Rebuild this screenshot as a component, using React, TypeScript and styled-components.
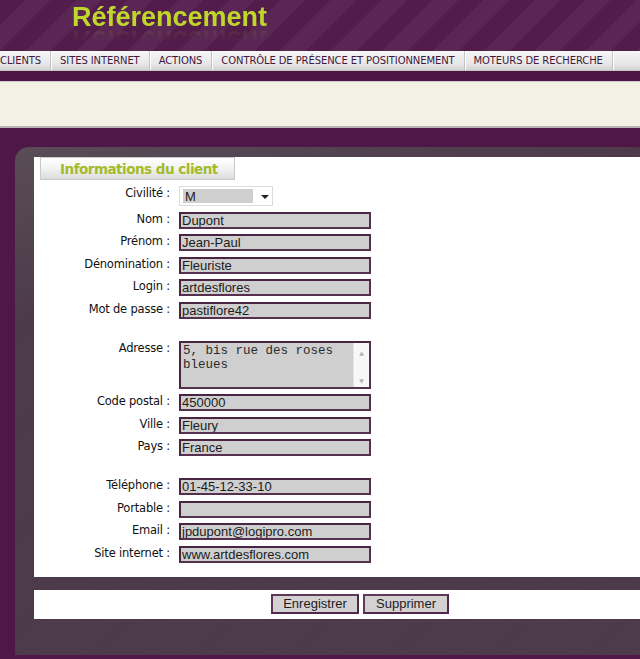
import React from 'react'
import styled, { createGlobalStyle } from 'styled-components'

const GlobalStyle = createGlobalStyle`
    body {
        margin: 0;
        background: #4f1748;
        font-family: "DejaVu Sans", Verdana, sans-serif;
        overflow: hidden;
    }
`

const Header = styled.div`
    height: 51px;
    background: repeating-linear-gradient(135deg, #521c4b 0px, #521c4b 18px, #5a2754 18px, #5a2754 36px);
    padding-left: 72px;
    box-sizing: border-box;
`

const Title = styled.div`
    font-family: "Liberation Sans", Arial, sans-serif;
    font-weight: bold;
    font-size: 27px;
    line-height: 32px;
    color: #bfd72a;
    padding-top: 1px;
    -webkit-box-reflect: below -9px linear-gradient(transparent 50%, rgba(255, 255, 255, 0.18));
`

const Nav = styled.ul`
    display: flex;
    margin: 0;
    padding: 0;
    list-style: none;
    height: 19px;
    background: linear-gradient(#f6f6f6, #e6e6e6 70%, #d2d2d2);
    border-bottom: 1px solid #c4c4c4;
`

const NavItem = styled.li<{ $first?: boolean }>`
    padding: 0 9px 0 ${p => (p.$first ? 0 : 9)}px;
    font-size: 10px;
    letter-spacing: -0.1px;
    line-height: 19px;
    text-transform: uppercase;
    color: #42183e;
    border-right: 1px solid #c2c2c2;
    box-shadow: 1px 0 0 #ffffff;
    white-space: nowrap;
`

const Band = styled.div`
    height: 10px;
    background: #4e1444;
    border-bottom: 1px solid #cfc8cd;
`

const Strip = styled.div`
    height: 44px;
    background: #f3f1e6;
    border-bottom: 2px solid #b8b2b6;
`

const Panel = styled.div`
    margin: 19px 0 0 15px;
    padding: 18px 0 36px 19px;
    border-top-left-radius: 14px;
    background:
        linear-gradient(165deg, rgba(110, 110, 110, 0.35) 0%, rgba(80, 60, 78, 0) 25%),
        repeating-linear-gradient(135deg, #4c3a4a 0px, #4c3a4a 3px, #4e3c4c 3px, #4e3c4c 5px);
`

const Card = styled.div`
    background: #ffffff;
    padding-bottom: 14px;
`

const Tab = styled.div`
    margin: -8px 0 0 6px;
    width: 195px;
    height: 23px;
    box-sizing: border-box;
    background: linear-gradient(#ffffff, #f2f2f2 50%, #dcdcdc);
    border: 1px solid #c9c9c9;
    padding-left: 19px;
    font-size: 13.5px;
    letter-spacing: -0.5px;
    font-weight: bold;
    line-height: 22px;
    color: #a3bb28;
`

const Form = styled.div`
    display: flex;
    flex-direction: column;
    gap: 5.55px;
    margin-top: 6px;
`

const Row = styled.div`
    display: grid;
    grid-template-columns: 136px 192px;
    column-gap: 9px;
    align-items: start;
`

const Spacer = styled.div`
    height: 10.8px;
`

const Label = styled.label`
    text-align: right;
    font-size: 11.5px;
    letter-spacing: -0.2px;
    line-height: 14px;
    color: #111111;
`

const Field = styled.div`
    height: 17px;
    box-sizing: border-box;
    background: #cfcfcf;
    border: 2px solid #56304f;
    border-top-color: #4a2443;
    border-left-color: #4a2443;
    padding-left: 1px;
    font-family: "Liberation Sans", Arial, sans-serif;
    font-size: 13px;
    line-height: 14px;
    color: #1c1c1c;
    overflow: hidden;
    white-space: nowrap;
`

const Area = styled.div`
    height: 48px;
    box-sizing: border-box;
    display: flex;
    background: #cfcfcf;
    border: 2px solid #56304f;
    border-top-color: #4a2443;
    border-left-color: #4a2443;
`

const AreaText = styled.div`
    flex: 1;
    padding: 1px 2px;
    font-family: "Liberation Mono", "Courier New", monospace;
    font-size: 12.5px;
    line-height: 14px;
    color: #2a2a2a;
`

const ScrollBar = styled.div`
    width: 15px;
    background: #f7f7f7;
    border-left: 1px solid #e6e6e6;
    display: flex;
    flex-direction: column;
    justify-content: space-between;
    align-items: center;
    padding: 6px 0 3px;
    font-size: 6px;
    color: #b4b4b4;
`

const SelectBox = styled.div`
    width: 94px;
    height: 20px;
    box-sizing: border-box;
    border: 1px solid #dcdcdc;
    padding: 2px 3px;
    display: flex;
    align-items: center;
    gap: 8px;
`

const SelectValue = styled.div`
    width: 72px;
    height: 14px;
    background: #cfcfcf;
    padding-left: 2px;
    font-family: "Liberation Sans", Arial, sans-serif;
    font-size: 13px;
    line-height: 15px;
    color: #1c1c1c;
`

const Caret = styled.div`
    width: 0;
    height: 0;
    border-left: 4px solid transparent;
    border-right: 4px solid transparent;
    border-top: 4px solid #222222;
    margin-top: 2px;
`

const Actions = styled.div`
    margin-top: 13px;
    height: 29px;
    box-sizing: border-box;
    background: #ffffff;
    padding: 4px 0 0 46px;
    display: flex;
    align-items: flex-start;
    justify-content: center;
    gap: 4px;
`

const Button = styled.button<{ $width: number }>`
    display: block;
    width: ${p => p.$width}px;
    height: 20px;
    box-sizing: border-box;
    background: #d4d1d3;
    border: 2px solid #50284a;
    border-top-color: #5e3a58;
    border-left-color: #5e3a58;
    font-family: "Liberation Sans", Arial, sans-serif;
    font-size: 13px;
    line-height: 16px;
    color: #1c1c1c;
    padding: 0;
    margin: 0;
    cursor: pointer;
`

const menu = ['Clients', 'Sites internet', 'Actions', 'Contrôle de présence et positionnement', 'Moteurs de recherche']

type Entry = { label: string; value: string } | 'gap'

const fields: Entry[] = [
    { label: 'Nom', value: 'Dupont' },
    { label: 'Prénom', value: 'Jean-Paul' },
    { label: 'Dénomination', value: 'Fleuriste' },
    { label: 'Login', value: 'artdesflores' },
    { label: 'Mot de passe', value: 'pastiflore42' },
    'gap',
]

const fieldsAfterAddress: Entry[] = [
    { label: 'Code postal', value: '450000' },
    { label: 'Ville', value: 'Fleury' },
    { label: 'Pays', value: 'France' },
    'gap',
    { label: 'Téléphone', value: '01-45-12-33-10' },
    { label: 'Portable', value: '' },
    { label: 'Email', value: 'jpdupont@logipro.com' },
    { label: 'Site internet', value: 'www.artdesflores.com' },
]

const renderEntries = (entries: Entry[]) =>
    entries.map((entry, index) =>
        entry === 'gap' ? (
            <Spacer key={index} />
        ) : (
            <Row key={entry.label}>
                <Label>{entry.label} :</Label>
                <Field>{entry.value}</Field>
            </Row>
        )
    )

export default function App() {
    return (
        <>
            <GlobalStyle />
            <Header>
                <Title>Référencement</Title>
            </Header>
            <Nav>
                {menu.map((item, index) => (
                    <NavItem key={item} $first={index === 0}>{item}</NavItem>
                ))}
            </Nav>
            <Band />
            <Strip />
            <Panel>
                <Card>
                    <Tab>Informations du client</Tab>
                    <Form>
                        <Row>
                            <Label>Civilité :</Label>
                            <SelectBox>
                                <SelectValue>M</SelectValue>
                                <Caret />
                            </SelectBox>
                        </Row>
                        {renderEntries(fields)}
                        <Row>
                            <Label>Adresse :</Label>
                            <Area>
                                <AreaText>5, bis rue des roses bleues</AreaText>
                                <ScrollBar>
                                    <span>▲</span>
                                    <span>▼</span>
                                </ScrollBar>
                            </Area>
                        </Row>
                        {renderEntries(fieldsAfterAddress)}
                    </Form>
                </Card>
                <Actions>
                    <Button $width={88}>Enregistrer</Button>
                    <Button $width={86}>Supprimer</Button>
                </Actions>
            </Panel>
        </>
    )
}
